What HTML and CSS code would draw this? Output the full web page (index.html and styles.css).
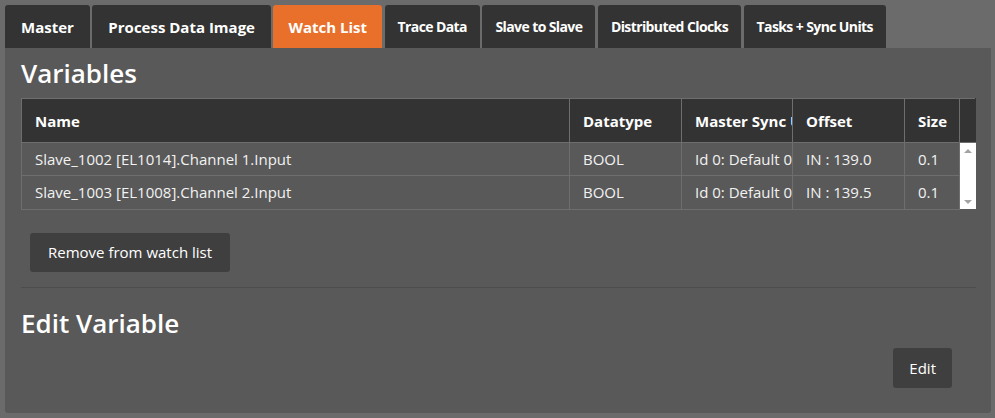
FILE: index.html
```html
<!DOCTYPE html>
<html lang="en">
<head>
  <meta charset="UTF-8">
  <title>Watch List</title>
  <link rel="stylesheet" href="styles.css">
</head>
<body>
  <!-- Tabs -->
  <div class="tab-bar">
    <div class="tab">Master</div>
    <div class="tab">Process Data Image</div>
    <div class="tab active">Watch List</div>
    <div class="tab compact">Trace Data</div>
    <div class="tab compact">Slave to Slave</div>
    <div class="tab compact">Distributed Clocks</div>
    <div class="tab compact">Tasks + Sync Units</div>
  </div>

  <!-- Tab content -->
  <div class="panel">
    <h2 class="section-title">Variables</h2>

    <table class="var-table">
      <colgroup>
        <col class="col-name">
        <col class="col-type">
        <col class="col-sync">
        <col class="col-offset">
        <col class="col-size">
        <col class="col-scroll">
      </colgroup>
      <thead>
        <tr>
          <th>Name</th>
          <th>Datatype</th>
          <th><div class="clip">Master Sync Unit</div></th>
          <th>Offset</th>
          <th>Size</th>
          <th class="scroll-head"></th>
        </tr>
      </thead>
      <tbody>
        <tr>
          <td>Slave_1002 [EL1014].Channel 1.Input</td>
          <td>BOOL</td>
          <td><div class="clip">Id 0: Default 0</div></td>
          <td>IN : 139.0</td>
          <td>0.1</td>
          <td class="scrollbar" rowspan="2">
            <div class="scroll-track">
              <span class="arrow up"></span>
              <span class="arrow down"></span>
            </div>
          </td>
        </tr>
        <tr>
          <td>Slave_1003 [EL1008].Channel 2.Input</td>
          <td>BOOL</td>
          <td><div class="clip">Id 0: Default 0</div></td>
          <td>IN : 139.5</td>
          <td>0.1</td>
        </tr>
      </tbody>
    </table>

    <div class="actions">
      <button class="btn">Remove from watch list</button>
    </div>

    <hr class="divider">

    <h2 class="section-title edit-title">Edit Variable</h2>

    <div class="edit-actions">
      <button class="btn btn-small">Edit</button>
    </div>
  </div>
</body>
</html>
```

FILE: styles.css
```css
html, body {
  margin: 0;
  padding: 0;
}

body {
  background-color: #6b6b6b;
  font-family: "Open Sans", "Noto Sans", sans-serif;
  color: #fff;
  padding: 5px 4px 5px 5px;
}

.tab-bar {
  display: flex;
  gap: 2.5px;
  height: 43px;
}

.tab {
  background-color: #333;
  border-radius: 3px 3px 0 0;
  padding: 0 16px;
  font-size: 15px;
  font-weight: 700;
  display: flex;
  align-items: center;
  cursor: pointer;
}

.tab.compact {
  font-size: 14px;
  letter-spacing: -0.6px;
  padding: 0 13px;
}

.tab.active {
  background-color: #e8702a;
  padding: 0 15px;
}

.panel {
  background-color: #595959;
  border-radius: 0 0 3px 3px;
  padding: 10px 15px 25px 16px;
  height: 330px;
}

.section-title {
  margin: 0;
  font-size: 26px;
  font-weight: 600;
  line-height: 30px;
}

.var-table {
  margin-top: 10px;
  width: 955px;
  border-collapse: collapse;
  table-layout: fixed;
  font-size: 15px;
}

.col-name { width: 548px; }
.col-type { width: 112px; }
.col-sync { width: 111px; }
.col-offset { width: 112px; }
.col-size { width: 55px; }
.col-scroll { width: 16px; }

.var-table th,
.var-table td {
  border: 1px solid #6e6e6e;
  text-align: left;
  padding: 0 0 0 13px;
  white-space: nowrap;
  overflow: hidden;
}

.var-table th {
  background-color: #333;
  height: 43px;
  font-weight: 700;
}

.var-table td {
  height: 32px;
  color: #f2f2f2;
}

.clip {
  overflow: hidden;
  white-space: nowrap;
}

.var-table .scroll-head {
  border-right-color: #333;
  padding: 0;
}

.var-table .scrollbar {
  padding: 0;
  background-color: #fff;
  border: none;
  vertical-align: top;
}

.scroll-track {
  height: 66px;
  display: flex;
  flex-direction: column;
  justify-content: space-between;
  align-items: center;
  padding: 6px 0 5px;
  box-sizing: border-box;
}

.arrow {
  width: 0;
  height: 0;
  border-left: 4px solid transparent;
  border-right: 4px solid transparent;
}

.arrow.up {
  border-bottom: 4px solid #a3a3a3;
}

.arrow.down {
  border-top: 4px solid #a3a3a3;
}

.actions {
  padding: 23px 0 0 9px;
}

.btn {
  background-color: #3f3f3f;
  color: #fff;
  border: none;
  border-radius: 3px;
  font-family: inherit;
  font-size: 15px;
  height: 39px;
  padding: 0 18px;
  cursor: pointer;
}

.btn-small {
  height: 40px;
  padding: 0 16px;
}

.divider {
  margin: 15px 0 0;
  width: 955px;
  border: none;
  border-top: 1px solid #4d4d4d;
}

.edit-title {
  margin-top: 20px;
}

.edit-actions {
  width: 931px;
  display: flex;
  justify-content: flex-end;
  margin-top: 10px;
}
```
